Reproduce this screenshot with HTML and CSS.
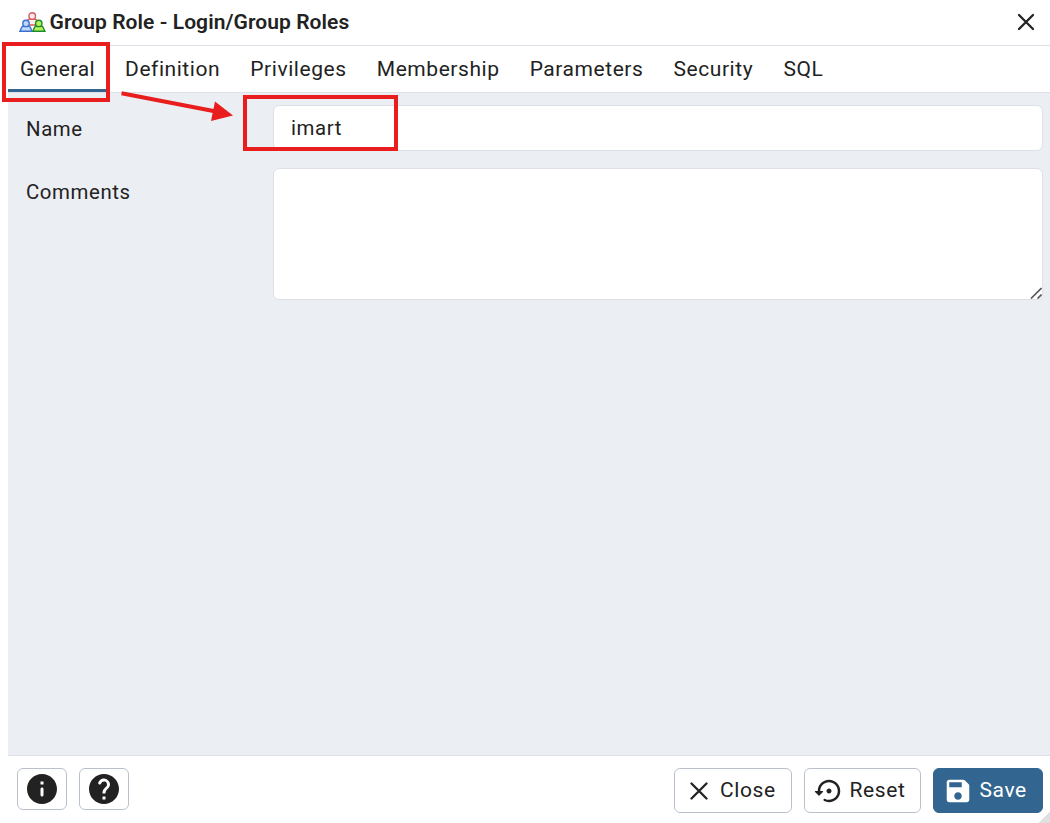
FILE: index.html
```html
<!DOCTYPE html>
<html lang="en">
<head>
<meta charset="utf-8">
<title>Group Role - Login/Group Roles</title>
<link rel="stylesheet" href="styles.css">
</head>
<body>
<div class="dialog">
  <header class="titlebar">
    <svg class="role-icon" viewBox="0 0 27 20">
      <g fill="#fdeeee" stroke="#d5595e" stroke-width="1.4"><path d="M6.500 13 8.500 8.200 10.600 7h5.200l2.100 1.200 2.400 4.800z"/><circle cx="13.200" cy="4" r="3.300"/></g>
      <g fill="#bcd8fb" stroke="#3d70cb" stroke-width="1.400"><path d="M.9 19.200 2.900 15l2-1.200h4.200l2 1.200 2 4.200z"/><circle cx="7" cy="11.400" r="3.200"/></g>
      <g fill="#b6f25a" stroke="#1d8a2c" stroke-width="1.400"><path d="M13.800 19.200 15.700 15l2-1.200h4.200l2 1.200 2 4.200z"/><circle cx="19.800" cy="11.400" r="3.200"/></g>
    </svg>
    <h1 class="title">Group Role - Login/Group Roles</h1>
    <button class="dismiss" aria-label="Close dialog"><svg viewBox="0 0 18 18"><path d="M2 2 16 16M16 2 2 16"/></svg></button>
  </header>
  <nav class="tabs">
    <a class="tab active">General</a>
    <a class="tab">Definition</a>
    <a class="tab">Privileges</a>
    <a class="tab">Membership</a>
    <a class="tab">Parameters</a>
    <a class="tab">Security</a>
    <a class="tab">SQL</a>
  </nav>
  <main class="form">
    <div class="label">Name</div>
    <div class="field name">imart</div>
    <div class="label">Comments</div>
    <div class="field comments"><svg class="grip" viewBox="0 0 12 12"><path d="M1 11.500 11.500 1M7.500 11.500l4-4"/></svg></div>
  </main>
  <footer class="footer">
    <button class="btn icon-btn" aria-label="Info"><svg class="i36" viewBox="0 0 24 24"><path d="M12 2C6.480 2 2 6.480 2 12s4.480 10 10 10 10-4.480 10-10S17.520 2 12 2zm0 15c-.55 0-1-.45-1-1v-4c0-.55.45-1 1-1s1 .45 1 1v4c0 .55-.45 1-1 1zm1-8h-2V7h2v2z"/></svg></button>
    <button class="btn icon-btn" aria-label="Help"><svg class="i36" viewBox="0 0 24 24"><path d="M12 2C6.480 2 2 6.480 2 12s4.480 10 10 10 10-4.480 10-10S17.520 2 12 2zm1 17h-2v-2h2zm2.070-7.750-.9.92c-.5.51-.86.97-1.040 1.690-.08.32-.13.68-.13 1.140h-2v-.5c0-.46.08-.9.22-1.310.2-.58.53-1.100.95-1.520l1.240-1.260c.46-.44.68-1.100.55-1.800-.13-.72-.69-1.330-1.390-1.530-1.110-.31-2.140.32-2.470 1.270-.12.37-.43.65-.82.65h-.3C8.400 9 8 8.440 8.160 7.880c.43-1.470 1.680-2.590 3.230-2.830 1.520-.24 2.970.55 3.870 1.800 1.180 1.630.83 3.380-.19 4.400z"/></svg></button>
    <span class="spacer"></span>
    <button class="btn close"><svg class="cross" viewBox="0 0 18 18"><path d="M1.500 1.500 16.500 16.500M16.500 1.500 1.500 16.500"/></svg><span>Close</span></button>
    <button class="btn reset"><svg class="i30" viewBox="0 0 24 24"><path d="M14 12c0-1.100-.9-2-2-2s-2 .9-2 2 .9 2 2 2 2-.9 2-2zm-2-9c-4.970 0-9 4.030-9 9H1.210c-.45 0-.67.54-.35.85l2.790 2.790c.2.2.51.2.71 0l2.790-2.790c.31-.31.09-.85-.36-.85H5c0-3.870 3.130-7 7-7s7 3.130 7 7-3.130 7-7 7c-1.100 0-2.100-.25-3.050-.7-.35-.18-.8-.1-1.080.18-.5.5-.38 1.300.22 1.600C9.270 20.670 10.600 21 12 21c4.970 0 9-4.030 9-9s-4.030-9-9-9z"/></svg><span>Reset</span></button>
    <button class="btn save"><svg class="i30" viewBox="0 0 24 24"><path d="M17.590 3.590c-.38-.38-.89-.59-1.420-.59H5c-1.110 0-2 .9-2 2v14c0 1.100.9 2 2 2h14c1.100 0 2-.9 2-2V7.830c0-.53-.21-1.040-.59-1.410l-2.820-2.830zM12 19c-1.660 0-3-1.340-3-3s1.340-3 3-3 3 1.340 3 3-1.340 3-3 3zm3-10H5V5h10v4z"/></svg><span>Save</span></button>
  </footer>
</div>
<div class="corner"></div>
<div class="mark mark-tab"></div>
<div class="mark mark-name"></div>
<svg class="arrow" viewBox="0 0 114 34"><path class="shaft" d="M1.500 3.300 96 21.500"/><path class="head" d="M95 11.500 113 25.500 91 31z"/></svg>
</body>
</html>
```
FILE: styles.css
```css
* { box-sizing: border-box; }
body {
  margin: 0;
  height: 823px;
  overflow: hidden;
  position: relative;
  background: #fff;
  color: #222;
  font: 21px/24px Roboto, sans-serif;
  letter-spacing: 0.6px;
}
button { font: inherit; color: inherit; letter-spacing: inherit; }
svg { display: block; flex: none; }
.dialog { height: 823px; padding-left: 8px; display: flex; flex-direction: column; }
.titlebar {
  height: 46px;
  border-bottom: 1px solid #dde0e6;
  display: flex;
  align-items: center;
  padding: 0 15px 1px 10.5px;
}
.role-icon { width: 27px; height: 20px; margin-right: 4px; }
.title { margin: 0; flex: 1; font-size: 21px; font-weight: 600; letter-spacing: 0.07px; }
.dismiss { border: 0; background: none; padding: 0; }
.dismiss svg { width: 18px; height: 18px; }
.dismiss path, .cross path { stroke: #222; stroke-width: 2.3; stroke-linecap: round; fill: none; }
.tabs { height: 47px; display: flex; border-bottom: 1px solid #dde0e6; letter-spacing: 0.55px; }
.tab { padding: 11px 15.1px 0; height: 46px; }
.tab.active { padding: 11px 14px 0 12px; margin-right: 0.7px; border-bottom: 3px solid #326690; }
.form {
  flex: 1;
  background: #ebeef3;
  display: grid;
  grid-template-columns: 247px 1fr;
  grid-template-rows: 46px 132px;
  row-gap: 17px;
  padding: 12px 7px 0 18px;
  font-size: 20.4px;
}
.label { padding-top: 12px; }
.field { background: #fff; border: 1px solid #dde0e6; border-radius: 6px; }
.name { padding: 10px 17px; }
.comments { display: flex; justify-content: flex-end; align-items: flex-end; }
.grip { width: 12px; height: 12px; }
.grip path { stroke: #555; stroke-width: 1.6; fill: none; }
.footer {
  height: 68px;
  border-top: 1px solid #dde0e6;
  display: flex;
  align-items: flex-start;
  gap: 12px;
  padding: 12px 7px 0 9px;
}
.spacer { flex: 1; }
.btn {
  height: 45px;
  border: 1px solid #bac1cd;
  border-radius: 6px;
  background: #fff;
  padding: 0;
  display: flex;
  align-items: center;
}
.btn svg { fill: #222; }
.btn span { padding-bottom: 2px; }
.icon-btn { width: 50px; height: 42px; justify-content: center; }
.i36 { width: 36px; height: 36px; }
.i30 { width: 30px; height: 30px; }
.cross { width: 18px; height: 18px; margin: 1px 12px 0 0; }
.close { width: 118px; padding-left: 15px; }
.reset { width: 117px; padding-left: 8.5px; }
.reset svg { margin-right: 6px; }
.save { width: 110px; padding-left: 9px; background: #326690; border-color: #326690; color: #fff; }
.save svg { fill: #fff; margin-right: 6.5px; }
.corner {
  position: absolute;
  right: 0;
  bottom: 0;
  width: 11px;
  height: 11px;
  background: linear-gradient(135deg, transparent 50%, #e0e0e0 50%);
}
.mark { position: absolute; border: 4px solid #e91c1e; }
.mark-tab { left: 2px; top: 42px; width: 108px; height: 60px; }
.mark-name { left: 243px; top: 95px; width: 155px; height: 56px; }
.arrow { position: absolute; left: 120px; top: 90px; width: 114px; height: 34px; }
.shaft { stroke: #e91c1e; stroke-width: 4; }
.head { fill: #e91c1e; }
```
